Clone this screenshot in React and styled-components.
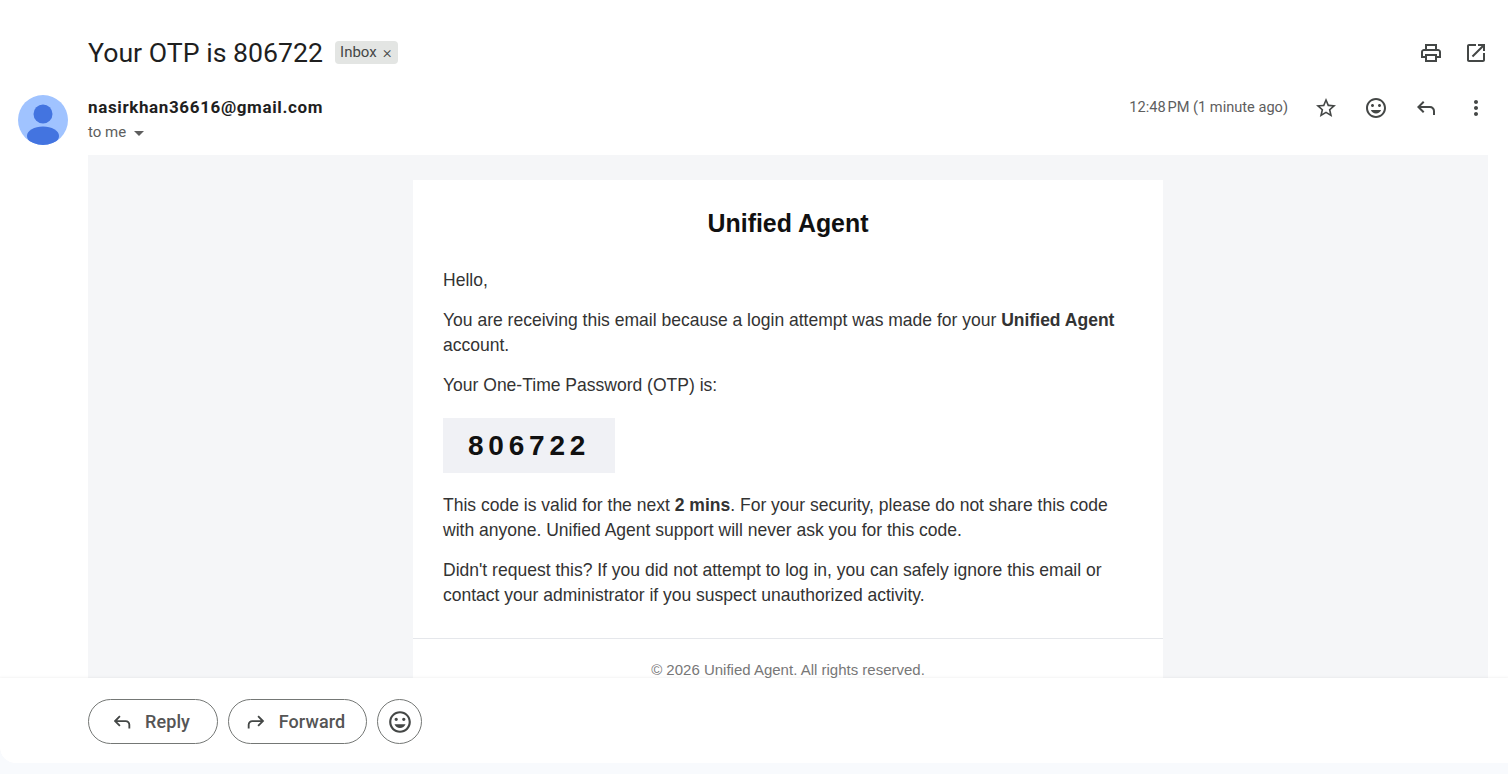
import React from 'react';
import styled, { createGlobalStyle } from 'styled-components';

const GlobalStyle = createGlobalStyle`
  html, body {
    margin: 0;
    padding: 0;
    height: 100%;
    overflow: hidden;
    background: #f8fafd;
  }
  * { box-sizing: border-box; }
`;

const Page = styled.div`
  height: 774px;
  background: #f8fafd;
  font-family: Roboto, Arial, sans-serif;
`;

const Card = styled.div`
  display: flex;
  flex-direction: column;
  height: 763px;
  background: #fff;
  border-radius: 0 0 0 16px;
  overflow: hidden;
`;

const TitleRow = styled.div`
  display: flex;
  align-items: center;
  height: 42px;
  margin-top: 31px;
  padding: 0 20px 0 88px;
`;

const Subject = styled.h1`
  margin: 2px 0 0;
  font-family: Roboto, "Open Sans", sans-serif;
  font-size: 26.7px;
  font-weight: 400;
  color: #1f1f1f;
`;

const Chip = styled.span`
  display: inline-flex;
  align-items: center;
  height: 23px;
  margin-left: 12px;
  padding: 0 6px 0 5px;
  border-radius: 4px;
  background: #e3e5e3;
  font-size: 15px;
  color: #444746;
`;

const ChipClose = styled.span`
  margin-left: 6px;
  font-size: 17px;
  font-weight: 300;
  line-height: 1;
`;

const TopActions = styled.div`
  display: flex;
  gap: 21px;
  margin-left: auto;
  padding-top: 2px;
`;

const MetaRow = styled.div`
  display: flex;
  height: 82px;
  padding: 22px 20px 0 18px;
`;

const Avatar = styled.svg`
  flex: none;
  width: 50px;
  height: 50px;
`;

const Sender = styled.div`
  margin-left: 20px;
`;

const SenderName = styled.div`
  font-family: Roboto, sans-serif;
  font-size: 17px;
  font-weight: 700;
  line-height: 24px;
  letter-spacing: 0.63px;
  color: #1f1f1f;
`;

const ToMe = styled.div`
  display: flex;
  align-items: center;
  margin-top: 3px;
  font-size: 15px;
  line-height: 20px;
  color: #5e5e5e;
`;

const Caret = styled.span`
  width: 0;
  height: 0;
  margin-left: 8px;
  margin-top: 2px;
  border-left: 5px solid transparent;
  border-right: 5px solid transparent;
  border-top: 5px solid #5e5e5e;
`;

const MetaRight = styled.div`
  display: flex;
  align-items: flex-start;
  margin-left: auto;
`;

const Time = styled.span`
  margin-top: 2px;
  margin-right: 26px;
  font-size: 14.6px;
  line-height: 20px;
  color: #5e5e5e;
`;

const MetaIcons = styled.div`
  display: flex;
  gap: 26px;
  padding-top: 1px;
`;

const Icon = styled.svg`
  display: block;
  flex: none;
  width: ${(p) => p.$size || 24}px;
  height: ${(p) => p.$size || 24}px;
  fill: ${(p) => p.$color || '#444746'};
  transform: ${(p) => (p.$flip ? 'scaleX(-1)' : 'none')};
`;

const MailArea = styled.div`
  flex: 1;
  min-height: 0;
  margin: 0 20px 0 88px;
  padding-top: 25px;
  background: #f5f6f8;
  overflow: hidden;
`;

const MailCard = styled.div`
  width: 750px;
  margin: 0 auto;
  background: #fff;
  font-family: "Liberation Sans", Arial, sans-serif;
  color: #333;
`;

const MailBody = styled.div`
  padding: 30px 30px 15px;
`;

const Brand = styled.h2`
  margin: 0 0 31px;
  font-size: 24.9px;
  font-weight: 700;
  line-height: 27px;
  text-align: center;
  color: #111;
`;

const Para = styled.p`
  margin: 0 0 15px;
  font-size: 17.52px;
  line-height: 25px;
  color: #333;

  strong {
    font-weight: 700;
  }
`;

const OtpBox = styled.div`
  display: inline-block;
  height: 55px;
  margin: 5px 0 20px;
  padding: 0 25px;
  background: #f0f1f5;
  font-size: 28px;
  font-weight: 700;
  line-height: 55px;
  letter-spacing: 4.8px;
  color: #111;
`;

const MailFooter = styled.div`
  padding: 21px 30px 20px;
  border-top: 1px solid #e5e7eb;
  font-size: 15px;
  line-height: 20px;
  text-align: center;
  color: #777;
`;

const Footer = styled.div`
  position: relative;
  display: flex;
  gap: 10px;
  height: 85px;
  padding: 21px 0 0 88px;
  background: #fff;
  box-shadow: 0 -1px 2px rgba(60, 64, 67, 0.06);
`;

const PillButton = styled.button`
  display: flex;
  align-items: center;
  justify-content: center;
  gap: 12px;
  width: ${(p) => p.$width}px;
  height: 45px;
  padding: 0 ${(p) => (p.$icon ? 0 : 5)}px 0 0;
  border: 1px solid #747775;
  border-radius: 23px;
  background: #fff;
  font-family: Roboto, sans-serif;
  font-size: 18px;
  font-weight: 500;
  letter-spacing: 0.1px;
  color: #555;
`;

const paths = {
  print:
    'M19 8h-1V3H6v5H5c-1.66 0-3 1.34-3 3v6h4v4h12v-4h4v-6c0-1.66-1.34-3-3-3zM8 5h8v3H8V5zm8 12v2H8v-4h8v2zm2-2v-2H6v2H4v-4c0-.55.45-1 1-1h14c.55 0 1 .45 1 1v4h-2z',
  open:
    'M19 19H5V5h7V3H5c-1.11 0-2 .9-2 2v14c0 1.1.89 2 2 2h14c1.1 0 2-.9 2-2v-7h-2v7zM14 3v2h3.59l-9.83 9.83 1.41 1.41L19 6.41V10h2V3h-7z',
  star:
    'M22 9.24l-7.19-.62L12 2 9.19 8.63 2 9.24l5.46 4.73L5.82 21 12 17.27 18.18 21l-1.63-7.03L22 9.24zM12 15.4l-3.76 2.27 1-4.28-3.32-2.88 4.38-.38L12 6.1l1.71 4.04 4.38.38-3.32 2.88 1 4.28L12 15.4z',
  smile:
    'M11.99 2C6.47 2 2 6.48 2 12s4.47 10 9.99 10C17.52 22 22 17.52 22 12S17.52 2 11.99 2zM12 20c-4.42 0-8-3.58-8-8s3.58-8 8-8 8 3.58 8 8-3.58 8-8 8zm3.5-9c.83 0 1.5-.67 1.5-1.5S16.33 8 15.5 8 14 8.67 14 9.5s.67 1.5 1.5 1.5zm-7 0c.83 0 1.5-.67 1.5-1.5S9.33 8 8.5 8 7 8.67 7 9.5 7.67 11 8.5 11zm3.5 6.5c2.33 0 4.31-1.46 5.11-3.5H6.89c.8 2.04 2.78 3.5 5.11 3.5z',
  reply:
    'M19 19v-4q0-1.25-.875-2.125T16 12H6.825l3.6 3.6L9 17l-6-6 6-6 1.425 1.4-3.6 3.6H16q2.075 0 3.538 1.463Q21 12.925 21 15v4Z',
  more:
    'M12 8c1.1 0 2-.9 2-2s-.9-2-2-2-2 .9-2 2 .9 2 2 2zm0 2c-1.1 0-2 .9-2 2s.9 2 2 2 2-.9 2-2-.9-2-2-2zm0 6c-1.1 0-2 .9-2 2s.9 2 2 2 2-.9 2-2-.9-2-2-2z',
};

function Glyph({ name, size, color, flip }) {
  return (
    <Icon viewBox="0 0 24 24" $size={size} $color={color} $flip={flip}>
      <path d={paths[name]} />
    </Icon>
  );
}

export default function App() {
  return (
    <Page>
      <GlobalStyle />
      <Card>
        <TitleRow>
          <Subject>Your OTP is 806722</Subject>
          <Chip>
            Inbox<ChipClose>×</ChipClose>
          </Chip>
          <TopActions>
            <Glyph name="print" />
            <Glyph name="open" />
          </TopActions>
        </TitleRow>

        <MetaRow>
          <Avatar viewBox="0 0 50 50">
            <defs>
              <clipPath id="avatarClip">
                <circle cx="25" cy="25" r="25" />
              </clipPath>
            </defs>
            <circle cx="25" cy="25" r="25" fill="#a0c3ff" />
            <g clipPath="url(#avatarClip)" fill="#4374e0">
              <circle cx="25" cy="19" r="9.5" />
              <ellipse cx="25" cy="41" rx="16" ry="9.5" />
            </g>
          </Avatar>
          <Sender>
            <SenderName>nasirkhan36616@gmail.com</SenderName>
            <ToMe>
              to me<Caret />
            </ToMe>
          </Sender>
          <MetaRight>
            <Time>12:48{'\u202f'}PM (1 minute ago)</Time>
            <MetaIcons>
              <Glyph name="star" />
              <Glyph name="smile" />
              <Glyph name="reply" />
              <Glyph name="more" />
            </MetaIcons>
          </MetaRight>
        </MetaRow>

        <MailArea>
          <MailCard>
            <MailBody>
              <Brand>Unified Agent</Brand>
              <Para>Hello,</Para>
              <Para>
                You are receiving this email because a login attempt was made for your{' '}
                <strong>Unified Agent</strong> account.
              </Para>
              <Para>Your One-Time Password (OTP) is:</Para>
              <OtpBox>806722</OtpBox>
              <Para>
                This code is valid for the next <strong>2 mins</strong>. For your security, please
                do not share this code with anyone. Unified Agent support will never ask you for
                this code.
              </Para>
              <Para>
                Didn't request this? If you did not attempt to log in, you can safely ignore this
                email or contact your administrator if you suspect unauthorized activity.
              </Para>
            </MailBody>
            <MailFooter>© 2026 Unified Agent. All rights reserved.</MailFooter>
          </MailCard>
        </MailArea>

        <Footer>
          <PillButton $width={130}>
            <Glyph name="reply" size={22} />
            Reply
          </PillButton>
          <PillButton $width={139}>
            <Glyph name="reply" size={22} flip />
            Forward
          </PillButton>
          <PillButton $width={45} $icon>
            <Glyph name="smile" size={26} />
          </PillButton>
        </Footer>
      </Card>
    </Page>
  );
}
